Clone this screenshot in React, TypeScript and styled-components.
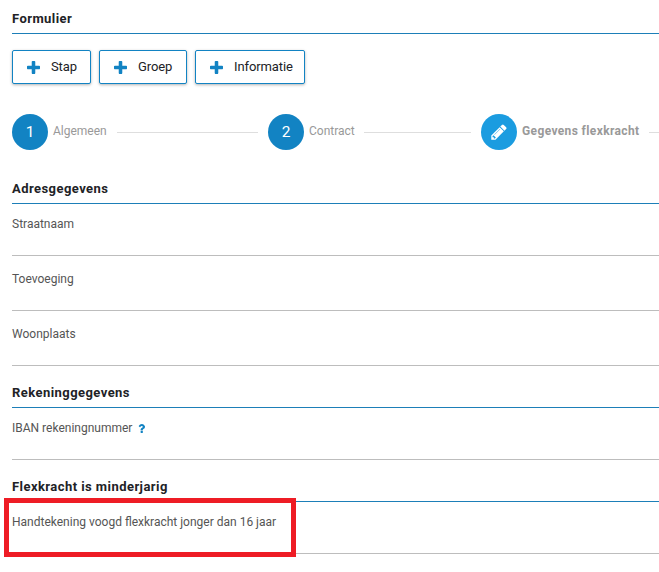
import React from "react";
import styled, { createGlobalStyle } from "styled-components";

const Global = createGlobalStyle`
  * { box-sizing: border-box; }
  html, body { margin: 0; background: #fff; overflow: hidden; }
  body { font-family: Roboto, "Liberation Sans", sans-serif; font-size: 12px; color: #212529; }
`;

const Page = styled.main`
  width: 659px;
  height: 572px;
  padding-left: 12px;
  overflow: hidden;
  position: relative;
`;

const Heading = styled.h2<{ $height: number }>`
  margin: 0;
  height: ${(p) => p.$height}px;
  padding-bottom: 6px;
  display: flex;
  align-items: flex-end;
  border-bottom: 1px solid #1d7fb8;
  font-size: 13px;
  line-height: 16px;
  font-weight: 700;
  letter-spacing: 0.44px;
  color: #212226;
  white-space: nowrap;
`;

const Toolbar = styled.div`
  display: flex;
  gap: 8px;
  padding-top: 16px;
`;

const Button = styled.button<{ $width: number }>`
  width: ${(p) => p.$width}px;
  height: 34px;
  padding: 0 0 0 14px;
  display: flex;
  align-items: center;
  gap: 11px;
  border: 1px solid #1283c3;
  border-radius: 2px;
  background: #fff;
  box-shadow: 0 1px 3px rgba(0, 0, 0, 0.3);
  font: 400 13px/16px Roboto, "Liberation Sans", sans-serif;
  letter-spacing: -0.1px;
  color: #212226;
  white-space: nowrap;
  svg { display: block; flex: none; }
`;

const Steps = styled.nav`
  display: flex;
  align-items: center;
  height: 36px;
  margin-top: 30px;
`;

const Circle = styled.span<{ $active?: boolean }>`
  flex: none;
  width: 36px;
  height: 36px;
  border-radius: 50%;
  display: flex;
  align-items: center;
  justify-content: center;
  background: ${(p) => (p.$active ? "#1b9ce0" : "#1283c3")};
  color: #fff;
  font-size: 15.5px;
`;

const StepLabel = styled.span<{ $width: number; $active?: boolean }>`
  flex: none;
  width: ${(p) => p.$width}px;
  margin-left: 5px;
  padding-bottom: 2px;
  line-height: 16px;
  letter-spacing: ${(p) => (p.$active ? 0.37 : 0)}px;
  font-weight: ${(p) => (p.$active ? 700 : 400)};
  color: #999;
  white-space: nowrap;
`;

const Connector = styled.span<{ $width: number }>`
  flex: none;
  width: ${(p) => p.$width}px;
  height: 1px;
  margin: 0 10px;
  background: #dedede;
`;

const Field = styled.div<{ $spaced?: boolean }>`
  height: ${(p) => (p.$spaced ? 55 : 52)}px;
  padding-top: ${(p) => (p.$spaced ? 15 : 12)}px;
  display: flex;
  align-items: flex-start;
  gap: 6px;
  border-bottom: 1px solid #bdbdbd;
  line-height: 16px;
  color: #555;
  white-space: nowrap;
  svg { margin-top: 4px; }
`;

const Highlight = styled.div`
  position: absolute;
  left: 4px;
  top: 498px;
  width: 292px;
  height: 59px;
  border: 5px solid #ee1c25;
`;

const Plus = () => (
  <svg width="13" height="13" viewBox="192 128 1408 1408" fill="#1283c3">
    <path d="M1600 736v192q0 40-28 68t-68 28h-416v416q0 40-28 68t-68 28h-192q-40 0-68-28t-28-68v-416h-416q-40 0-68-28t-28-68v-192q0-40 28-68t68-28h416v-416q0-40 28-68t68-28h192q40 0 68 28t28 68v416h416q40 0 68 28t28 68z" />
  </svg>
);

const Pencil = () => (
  <svg width="18" height="18" viewBox="0 0 1792 1792" fill="#fff">
    <path d="M491 1536l91-91-235-235-91 91v107h128v128h107zm523-928q0-22-22-22-10 0-17 7l-542 542q-7 7-7 17 0 22 22 22 10 0 17-7l542-542q7-7 7-17zm-54-192l416 416-832 832h-416v-416zm683 96q0 53-37 90l-166 166-416-416 166-165q36-38 90-38 53 0 91 38l235 234q37 39 37 91z" />
  </svg>
);

const Help = () => (
  <svg width="7" height="9" viewBox="386 256 1018 1280" fill="#1283c3">
    <path d="M1088 1256v240q0 16-12 28t-28 12h-240q-16 0-28-12t-12-28v-240q0-16 12-28t28-12h240q16 0 28 12t12 28zm316-600q0 54-15.500 101t-35 76.500-55 59.500-57.500 43.500-61 35.500q-41 23-68.500 65t-27.500 67q0 17-12 32.500t-28 15.500h-240q-15 0-25.500-18.500t-10.500-37.500v-45q0-83 65-156.500t143-108.500q59-27 84-56t25-76q0-42-46.500-74t-107.500-32q-65 0-108 29-35 25-107 115-13 16-31 16-12 0-25-8l-164-125q-13-10-15.500-25t5.500-28q160-266 464-266 80 0 161 31t146 83 106 127.500 41 158.500z" />
  </svg>
);

export default function App() {
  return (
    <>
      <Global />
      <Page>
        <Heading $height={34}>Formulier</Heading>
        <Toolbar>
          <Button $width={79}><Plus />Stap</Button>
          <Button $width={88}><Plus />Groep</Button>
          <Button $width={110}><Plus />Informatie</Button>
        </Toolbar>
        <Steps>
          <Circle>1</Circle>
          <StepLabel $width={54}>Algemeen</StepLabel>
          <Connector $width={141} />
          <Circle>2</Circle>
          <StepLabel $width={45}>Contract</StepLabel>
          <Connector $width={107} />
          <Circle $active><Pencil /></Circle>
          <StepLabel $width={117} $active>Gegevens flexkracht</StepLabel>
          <Connector $width={40} />
        </Steps>
        <Heading $height={54}>Adresgegevens</Heading>
        <Field>Straatnaam</Field>
        <Field $spaced>Toevoeging</Field>
        <Field $spaced>Woonplaats</Field>
        <Heading $height={42}>Rekeninggegevens</Heading>
        <Field>IBAN rekeningnummer<Help /></Field>
        <Heading $height={42}>Flexkracht is minderjarig</Heading>
        <Field>Handtekening voogd flexkracht jonger dan 16 jaar</Field>
        <Highlight />
      </Page>
    </>
  );
}
